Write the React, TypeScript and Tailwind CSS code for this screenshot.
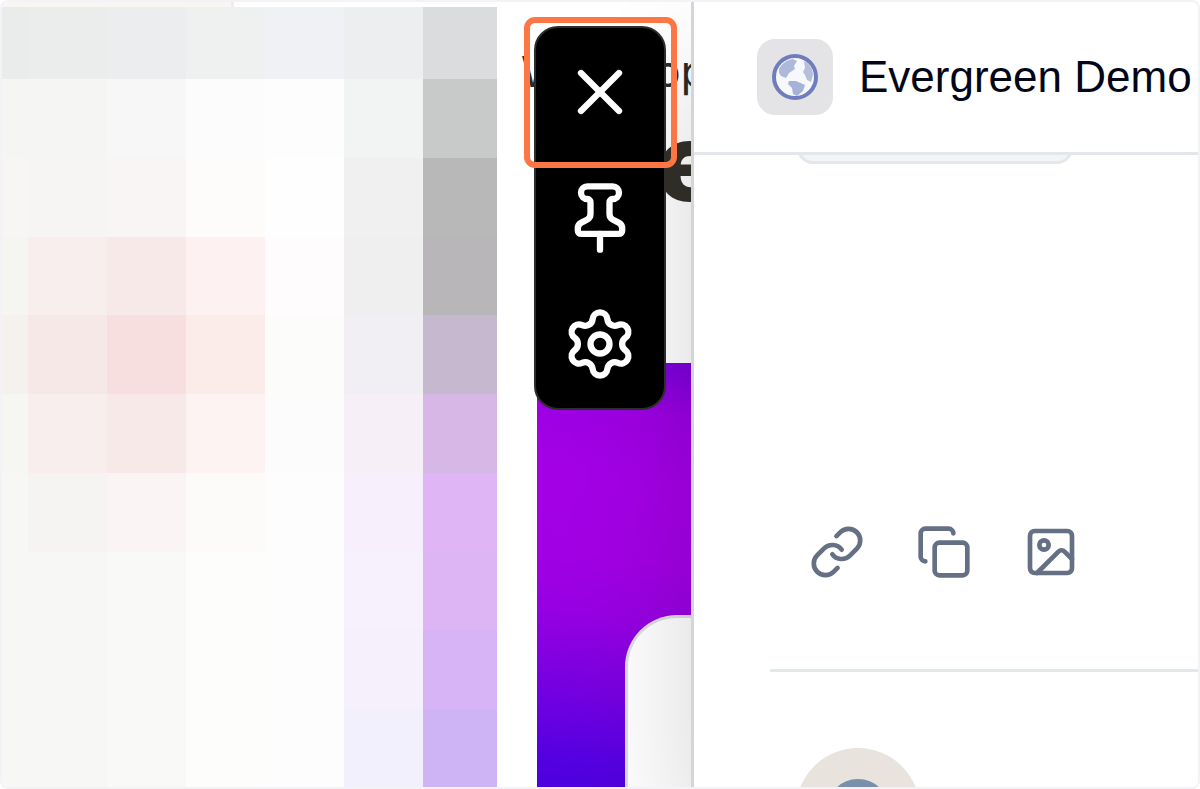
import React from "react"
import { Copy, Image, Link, Pin, Settings, X } from "lucide-react"

// one row of the mosaic per entry, left to right
const mosaic = [
  ["bg-[#e9ecea]", "bg-[#ebedec]", "bg-[#ebedef]", "bg-[#eff1f0]", "bg-[#f0f1f4]", "bg-[#edeef0]", "bg-[#dbdcde]"],
  ["bg-[#f5f5f3]", "bg-[#f5f5f3]", "bg-[#f7f7f7]", "bg-[#fcfcfc]", "bg-[#fdfdfd]", "bg-[#f1f4f3]", "bg-[#c8cac9]"],
  ["bg-[#f7f6f4]", "bg-[#f6f5f3]", "bg-[#f9f5f4]", "bg-[#fdfcfa]", "bg-[#fefefe]", "bg-[#f0f0f0]", "bg-[#b8b8b8]"],
  ["bg-[#f5f5f2]", "bg-[#f8eeed]", "bg-[#f7e9e8]", "bg-[#fdf2f1]", "bg-[#fefcfd]", "bg-[#efefef]", "bg-[#b8b6b9]"],
  ["bg-[#f5f1ee]", "bg-[#f5e8e6]", "bg-[#f6dfde]", "bg-[#fbecea]", "bg-[#fcfcfa]", "bg-[#f1eff3]", "bg-[#c6b8ce]"],
  ["bg-[#f6f6f3]", "bg-[#f8eeed]", "bg-[#f7e9e8]", "bg-[#fdf3f2]", "bg-[#fdfcfd]", "bg-[#f6eff8]", "bg-[#d7b7e6]"],
  ["bg-[#f7f7f5]", "bg-[#f5f4f2]", "bg-[#faf5f4]", "bg-[#fcfbf9]", "bg-[#fdfdfd]", "bg-[#f7effc]", "bg-[#dfb5f5]"],
  ["bg-[#f7f7f5]", "bg-[#f7f7f5]", "bg-[#f9f9f7]", "bg-[#fdfdfb]", "bg-[#fdfdfd]", "bg-[#f7f0fd]", "bg-[#ddb5f5]"],
  ["bg-[#f7f7f5]", "bg-[#f7f7f5]", "bg-[#f9f9f7]", "bg-[#fdfdfb]", "bg-[#fdfdfd]", "bg-[#f6f0fd]", "bg-[#d6b4f5]"],
  ["bg-[#f7f7f5]", "bg-[#f7f7f5]", "bg-[#f9f9f7]", "bg-[#fdfdfb]", "bg-[#fdfdfd]", "bg-[#f3f0fd]", "bg-[#cfb4f5]"],
]

const Mosaic: React.FC = () => (
  <section className="flex w-[495px] shrink-0 flex-col">
    <div className="h-[5px] w-[232px] shrink-0 border-r-3 border-[#efeeee] bg-[#f7f6f3]" />
    <div className="grid grow grid-cols-[26px_repeat(5,79px)_1fr] grid-rows-[72px_79px_79px_78px_79px_79px_79px_78px_79px_1fr]">
      {mosaic.flat().map((tone, i) => (
        <div key={i} className={tone} />
      ))}
    </div>
  </section>
)

const PagePreview: React.FC = () => (
  <section className="flex w-[194px] shrink-0 flex-col overflow-hidden whitespace-nowrap bg-white pt-11 font-['Inter',sans-serif]">
    <p className="pl-6 text-[43px] leading-[50px] text-[#2b2a27]">Web App</p>
    <h1 className="pl-12 text-[108px] leading-[132px] font-black text-[#33302a]">Welcome</h1>
    <div className="mt-[135px] ml-10 flex grow flex-col bg-[linear-gradient(188deg,#7a00dc_0%,#9c00e2_13%,#a400e6_28%,#a200e4_46%,#9600e2_60%,#7400e0_78%,#5600e2_92%,#4c00dc_100%)] pt-[252px] pl-[88px]">
      <div className="grow rounded-tl-[52px] border-t-3 border-l-3 border-[#dcdde0] bg-white" />
    </div>
  </section>
)

const Globe: React.FC = () => (
  <svg viewBox="0 0 48 48" className="size-12" aria-hidden="true">
    <circle cx="24" cy="24" r="21" fill="#f6f8fc" stroke="#6f7dbd" strokeWidth="4" />
    <path d="M8 16c3-6 8-9 14-10l4 2-3 5 1 3-6 4-3 5-5-2-2-3z" fill="#aeb9da" />
    <path d="M33 8c6 3 9 8 9 14l-2 7-4-2-2-5-2-3 2-4z" fill="#b5bfdd" />
    <path d="M18 28l7 0 9 4-2 6-6 5-4-2-1-6-4-4z" fill="#a6b2d8" />
  </svg>
)

const Toolbar: React.FC = () => (
  <nav className="absolute top-6 left-[532px] flex w-[132px] flex-col rounded-3xl border-2 border-[#2c2e2d] bg-black p-px text-white">
    <button aria-label="Close" className="flex h-[126px] items-center justify-center">
      <X className="size-[76px]" />
    </button>
    <button aria-label="Pin" className="flex h-[126px] items-center justify-center">
      <Pin className="size-[76px]" />
    </button>
    <button aria-label="Settings" className="flex h-[126px] items-center justify-center">
      <Settings className="size-[76px]" />
    </button>
  </nav>
)

const SidePanel: React.FC = () => (
  <aside className="flex min-w-0 grow flex-col overflow-hidden bg-white">
    <header className="flex h-[153px] shrink-0 items-center gap-[26px] border-b-3 border-[#e3e6eb] pl-[63px]">
      <div className="flex size-[76px] shrink-0 items-center justify-center rounded-[18px] bg-[#e4e4e7]">
        <Globe />
      </div>
      <h2 className="whitespace-nowrap text-[44px] leading-[52px] text-[#020617]">Evergreen Demo</h2>
    </header>
    <div className="flex h-[9px] shrink-0 items-end overflow-hidden pl-[103px]">
      <div className="h-8 w-[276px] shrink-0 rounded-2xl border-3 border-[#e3e6eb] bg-[#f3f4f6]" />
    </div>
    <div className="mt-[360px] ml-[115px] flex gap-[51px] text-[#667085]">
      <button aria-label="Copy link">
        <Link className="size-14" />
      </button>
      <button aria-label="Duplicate">
        <Copy className="size-14" />
      </button>
      <button aria-label="Add image">
        <Image className="size-14" />
      </button>
    </div>
    <hr className="mt-[89px] ml-[76px] shrink-0 border-t-3 border-[#e3e8eb]" />
    <svg viewBox="0 0 124 124" className="mt-[76px] ml-[102px] size-[124px] shrink-0" aria-hidden="true">
      <circle cx="62" cy="62" r="62" fill="#e8e3dd" />
      <circle cx="62" cy="62" r="31" fill="#7890a9" />
    </svg>
  </aside>
)

export default function App() {
  return (
    <div className="h-screen bg-white">
      <main className="relative flex h-full overflow-hidden rounded-lg border-2 border-[#f3f2f7] bg-white font-['Liberation_Sans',Arial,sans-serif]">
        <Mosaic />
        <PagePreview />
        <div className="z-10 flex min-w-0 grow border-l-3 border-[#d2d5da] shadow-[0_70px_120px_rgba(0,0,0,0.16)]">
          <SidePanel />
        </div>
        <div className="absolute inset-y-0 left-0 z-20">
          <Toolbar />
          <div className="pointer-events-none absolute top-[15px] left-[522px] h-[151px] w-[153px] rounded-[11px] border-6 border-[#ff7645]" />
        </div>
      </main>
    </div>
  )
}
